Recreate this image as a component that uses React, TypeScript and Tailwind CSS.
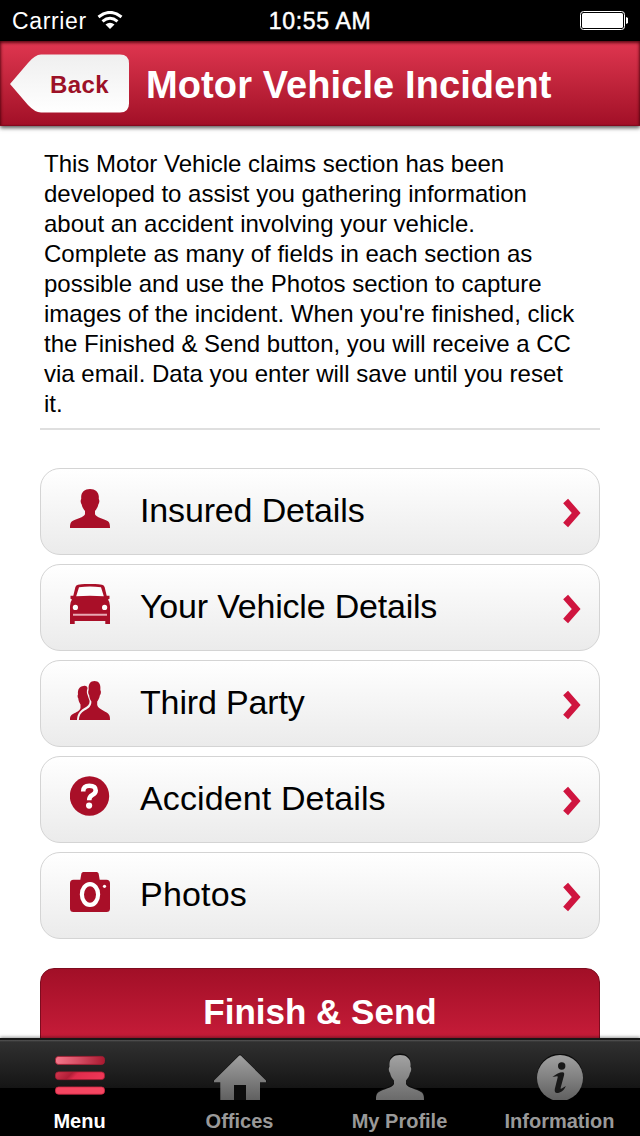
import type { ReactNode } from "react";

const PERSON_PATH =
  "M20 0C25.2 0 28.6 3 28.8 7.5C28.9 9 28.6 10 29 10.5C29.7 11.5 29.3 14.2 28.3 15.5C27.7 18.4 26.6 20 25 22V25.2C26 28.4 34 29.8 37.5 32C39.5 33.4 40 35 40 39H0C0 35 .5 33.4 2.5 32C6 29.8 14 28.4 15 25.2V22C13.4 20 12.3 18.4 11.7 15.5C10.7 14.2 10.3 11.5 11 10.5C11.4 10 11.1 9 11.2 7.5C11.4 3 14.8 0 20 0Z";

const PersonIcon = () => (
  <svg className="h-10 w-10" viewBox="0 0 40 40" fill="#a90f28">
    <path d={PERSON_PATH} transform="translate(0 1)" />
  </svg>
);

const CarIcon = () => (
  <svg className="h-10 w-10" viewBox="0 0 40 40">
    <path
      d="M8 .7Q20-1 32 .7Q34 .9 34.6 3L36.7 11.8H39.5V14.7L38 15.5Q40 18 40 22V40H35.3V37H4.7V40H0V22Q0 18 2 15.5L.5 14.7V11.8H3.3L5.4 3Q6 .9 8 .7Z"
      fill="#a90f28"
    />
    <path d="M9 3.2Q20 1.7 31 3.2L33.8 12.3Q20 11 6.2 12.3Z" fill="#fcfcfc" />
    <circle cx="5.4" cy="23.4" r="2.6" fill="#fcfcfc" />
    <circle cx="34.6" cy="23.4" r="2.6" fill="#fcfcfc" />
    <path d="M3 30.7H37" stroke="#e8a8b2" strokeWidth="1.9" />
  </svg>
);

const PeopleIcon = () => (
  <svg className="h-10 w-10" viewBox="0 0 40 40" fill="#a90f28">
    <g transform="translate(0 1)">
      <path d="M13.5 5C16 4.5 17.5 5.5 17.5 7.5C16.5 10 16.8 12.5 17.6 14C18.3 17 19.6 18.5 19.6 20.5C19.6 23.5 17.8 25 14 27.2C9.5 30 7.3 33 7 39H0C0 35.5 .5 34.5 3 33C6.5 31 9.6 30 10.5 27V23.5C9 21 8.4 19 8.3 17.5C7.5 16 7.3 14.5 8 13.5C7.5 8 9.5 5.5 13.5 5Z" />
      <path d="M24.5 0C28.5 0 30.6 2.8 30.4 7C30.3 8.3 30.3 9.3 30.8 10C31.1 12 30.7 13.3 29.9 14.2C29.3 17.5 28.2 19 27.2 20.5V24C28.2 28 35 30 38 32.5C39.6 34 40 35.5 40 39H8.8C9 34.5 11 31.5 14.5 29.5C19 27.2 21.4 25.3 21.4 20.5C20 18.5 19.4 16.5 19.2 14.2C18.3 13 18 11.5 18.3 10C18.8 9 18.6 8 18.6 7C18.5 2.8 20.5 0 24.5 0Z" />
    </g>
  </svg>
);

const QuestionIcon = () => (
  <svg className="h-10 w-10" viewBox="0 0 40 40">
    <circle cx="19.5" cy="20" r="19.7" fill="#a90f28" />
    <path
      d="M13.2 15.5Q13 9.8 19.3 9.8Q25.7 9.8 25.7 14.5Q25.7 17.2 22.3 19Q19.2 20.6 19.2 24.3"
      fill="none"
      stroke="#fff"
      strokeWidth="4.6"
    />
    <circle cx="19.1" cy="29.6" r="3.1" fill="#fff" />
  </svg>
);

const CameraIcon = () => (
  <svg className="h-10 w-10" viewBox="0 0 40 40">
    <path
      d="M13.3 0H26.7Q28.2 0 28.6 1.5L29.7 7.7H36.5Q40 7.7 40 11.2V36.5Q40 40 36.5 40H3.5Q0 40 0 36.5V11.2Q0 7.7 3.5 7.7H10.3L11.4 1.5Q11.8 0 13.3 0Z"
      fill="#a90f28"
    />
    <ellipse cx="20" cy="22.5" rx="8.1" ry="10.4" fill="none" stroke="#fff" strokeWidth="4.2" />
    <circle cx="34.5" cy="14.3" r="1.6" fill="#fff" />
  </svg>
);

const TabGradient = ({ id }: { id: string }) => (
  <defs>
    <linearGradient id={id} x1="0" y1="0" x2="0" y2="46" gradientUnits="userSpaceOnUse">
      <stop stopColor="#a3a3a3" />
      <stop offset="1" stopColor="#606060" />
    </linearGradient>
  </defs>
);

const MenuTabIcon = () => (
  <svg className="h-[46px] w-[54px]" viewBox="0 0 54 46">
    <defs>
      <linearGradient id="barTop" x1="0" y1="0" x2="1" y2="0">
        <stop stopColor="#f5788b" />
        <stop offset=".45" stopColor="#d75167" />
        <stop offset="1" stopColor="#a91930" />
      </linearGradient>
      <linearGradient id="barMid" x1="0" y1="0" x2="1" y2=".15">
        <stop stopColor="#d2384f" />
        <stop offset=".35" stopColor="#b01d36" />
        <stop offset=".48" stopColor="#df2c4c" />
        <stop offset="1" stopColor="#ed3656" />
      </linearGradient>
    </defs>
    <rect x="2.5" y="2.4" width="49" height="8" rx="3" fill="url(#barTop)" stroke="#a91d34" strokeWidth=".8" />
    <rect x="2.5" y="17.9" width="49" height="7.7" rx="3" fill="url(#barMid)" stroke="#a91d34" strokeWidth=".8" />
    <rect x="2.5" y="33" width="49" height="7.2" rx="3" fill="#f44661" stroke="#cf2744" strokeWidth=".8" />
  </svg>
);

const HomeTabIcon = () => (
  <svg className="h-[46px] w-[54px]" viewBox="0 0 54 46">
    <TabGradient id="home" />
    <path d="M27 0L53.5 26.5V28H0.5V26.5Z" fill="#0c0c0c" />
    <path d="M20.5 30H33.5V46H20.5Z" fill="#0c0c0c" />
    <path d="M26 1.8Q27 .8 28 1.8L53 26.5V28.2H47V46H33V31H21V46H7.3V28.2H1V26.5Z" fill="url(#home)" />
  </svg>
);

const ProfileTabIcon = () => (
  <svg className="h-[46px] w-[54px] overflow-visible" viewBox="0 0 54 46">
    <TabGradient id="profile" />
    <g transform="translate(3 1) scale(1.2 1.155)">
      <path d={PERSON_PATH} fill="#0c0c0c" transform="translate(0 -1.2)" />
      <path d={PERSON_PATH} fill="url(#profile)" />
    </g>
  </svg>
);

const InfoTabIcon = () => (
  <svg className="h-[46px] w-[54px]" viewBox="0 0 54 46">
    <TabGradient id="info" />
    <circle cx="27" cy="22.6" r="23" fill="#0c0c0c" />
    <circle cx="27" cy="24" r="23" fill="url(#info)" />
    <circle cx="28.7" cy="12" r="3.7" fill="#181818" />
    <path
      d="M19.5 23Q25 18.5 29.5 18.3Q31.8 18.3 31 21.5L27.6 33.9Q27.2 35.5 30 33.7L32.8 31.9Q31.3 36.5 26.5 38.5Q21 40.5 21.8 35L24.7 23.3Q25.2 21.5 22.5 22.5Z"
      fill="#181818"
    />
  </svg>
);

interface MenuRowProps {
  icon: ReactNode;
  label: string;
  spacing: string;
}

const MenuRow = ({ icon, label, spacing }: MenuRowProps) => (
  <button className="flex h-[87px] w-full items-center rounded-[20px] border border-[#d4d4d4] bg-linear-to-b from-white to-[#ebebeb] pr-[18px] pl-[29px] text-left">
    <span className="mb-[7px] shrink-0">{icon}</span>
    <span className={`mb-[3px] ml-[30px] flex-1 text-[34px] leading-10 whitespace-nowrap ${spacing}`}>
      {label}
    </span>
    <svg className="mt-[2px] h-[30px] w-[18px]" viewBox="0 0 18 30">
      <path d="M2.6 3L13.2 15L2.6 27" fill="none" stroke="#cf153f" strokeWidth="6.5" />
    </svg>
  </button>
);

const menuItems: MenuRowProps[] = [
  { icon: <PersonIcon />, label: "Insured Details", spacing: "tracking-[-0.15px]" },
  { icon: <CarIcon />, label: "Your Vehicle Details", spacing: "tracking-[-0.2px]" },
  { icon: <PeopleIcon />, label: "Third Party", spacing: "tracking-[-0.15px]" },
  { icon: <QuestionIcon />, label: "Accident Details", spacing: "tracking-[0.12px]" },
  { icon: <CameraIcon />, label: "Photos", spacing: "tracking-[0.2px]" },
];

const introLines = [
  "This Motor Vehicle claims section has been",
  "developed to assist you gathering information",
  "about an accident involving your vehicle.",
  "Complete as many of fields in each section as",
  "possible and use the Photos section to capture",
  "images of the incident. When you're finished, click",
  "the Finished & Send button, you will receive a CC",
  "via email. Data you enter will save until you reset",
  "it.",
];

const tabs = [
  { label: "Menu", icon: <MenuTabIcon />, color: "text-white" },
  { label: "Offices", icon: <HomeTabIcon />, color: "text-[#999]" },
  { label: "My Profile", icon: <ProfileTabIcon />, color: "text-[#999]" },
  { label: "Information", icon: <InfoTabIcon />, color: "text-[#999]" },
];

const StatusBar = () => (
  <div className="flex h-[41px] shrink-0 items-center bg-black px-3 text-white">
    <div className="flex flex-1 items-center">
      <span className="mt-px text-[23px] tracking-[0.65px]">Carrier</span>
      <svg className="ml-[10px] h-[19px] w-[26px]" viewBox="0 0 26 19">
        <g fill="none" stroke="#fff" strokeWidth="3">
          <path d="M1.5 6Q13-3.2 24.5 6" />
          <path d="M5.5 10.3Q13 4.2 20.5 10.3" />
        </g>
        <path d="M8.5 13.5Q13 10 17.5 13.5L13 18Z" fill="#fff" />
      </svg>
    </div>
    <span className="mt-px text-[23px] tracking-[0.65px] [-webkit-text-stroke:0.5px_white]">10:55 AM</span>
    <div className="flex flex-1 justify-end">
      <svg className="h-5 w-[50px]" viewBox="0 0 50 20">
        <rect x="2.5" y=".5" width="44" height="18" rx="3" fill="none" stroke="#fff" />
        <rect x="4" y="2" width="41" height="15" rx="1.5" fill="#fff" />
        <path d="M48 6Q51 7 51 9.5T48 13Z" fill="#fff" />
      </svg>
    </div>
  </div>
);

const Header = () => (
  <header className="relative z-10 flex h-[85px] shrink-0 items-center border-b border-[#85091e] bg-linear-to-b from-[#e03650] to-[#a20f27] pl-[10px] shadow-[0_2px_4px_rgba(0,0,0,0.65),inset_0_3px_3px_-1px_rgba(70,0,10,0.8),inset_3px_0_3px_-2px_rgba(70,0,10,0.7),inset_-3px_0_3px_-2px_rgba(70,0,10,0.7)]">
    <button className="relative mt-px h-[59px] w-[119px] text-left">
      <svg className="absolute inset-0 h-full w-full" viewBox="0 0 119 59">
        <defs>
          <linearGradient id="back" x1="0" y1="0" x2="0" y2="1">
            <stop stopColor="#efefef" />
            <stop offset="1" stopColor="#fff" />
          </linearGradient>
        </defs>
        <path
          d="M0 30L18 9Q25 .5 31 .5H110Q119 .5 119 9.5V49.5Q119 58.5 110 58.5H31Q25 58.5 18 51Z"
          fill="url(#back)"
        />
      </svg>
      <span className="relative top-px ml-[40px] text-[24px] font-bold tracking-[0.4px] text-[#9c1127]">Back</span>
    </button>
    <h1 className="mt-[3px] ml-[17px] text-[38px] leading-10 font-bold tracking-[0.1px] whitespace-nowrap text-white">
      Motor Vehicle Incident
    </h1>
  </header>
);

const TabBar = () => (
  <nav className="relative z-10 grid h-[98px] shrink-0 grid-cols-4 border-t-2 border-[#171717] bg-[linear-gradient(#555_0px,#303030_2px,#151515_48px,#000_48px)] shadow-[0_-1px_3px_rgba(0,0,0,0.4)]">
    {tabs.map((tab) => (
      <button key={tab.label} className={`flex flex-col items-center pt-[14px] ${tab.color}`}>
        {tab.icon}
        <span className="mt-[9px] mr-px text-[20px] leading-6 font-bold whitespace-nowrap">{tab.label}</span>
      </button>
    ))}
  </nav>
);

export default function App() {
  return (
    <div className="flex h-[1136px] w-[640px] flex-col overflow-hidden bg-white font-['Liberation_Sans',Arial,sans-serif] text-black">
      <StatusBar />
      <Header />
      <main className="flex min-h-0 flex-1 flex-col overflow-hidden px-10">
        <div className="shrink-0 border-b-2 border-[#dfdfdf] px-1 pt-[23px] pb-[9px] text-[24px] leading-[30px]">
          {introLines.map((line) => (
            <p key={line} className="whitespace-nowrap">
              {line}
            </p>
          ))}
        </div>
        <div className="mt-[38px] flex shrink-0 flex-col gap-[9px]">
          {menuItems.map((item) => (
            <MenuRow key={item.label} {...item} />
          ))}
        </div>
        <button className="mt-[29px] h-[88px] shrink-0 rounded-[14px] border border-[#7d0c1f] bg-linear-to-b from-[#a20f27] to-[#cf1f3d] text-[35px] font-bold text-white">
          Finish &amp; Send
        </button>
      </main>
      <TabBar />
    </div>
  );
}
